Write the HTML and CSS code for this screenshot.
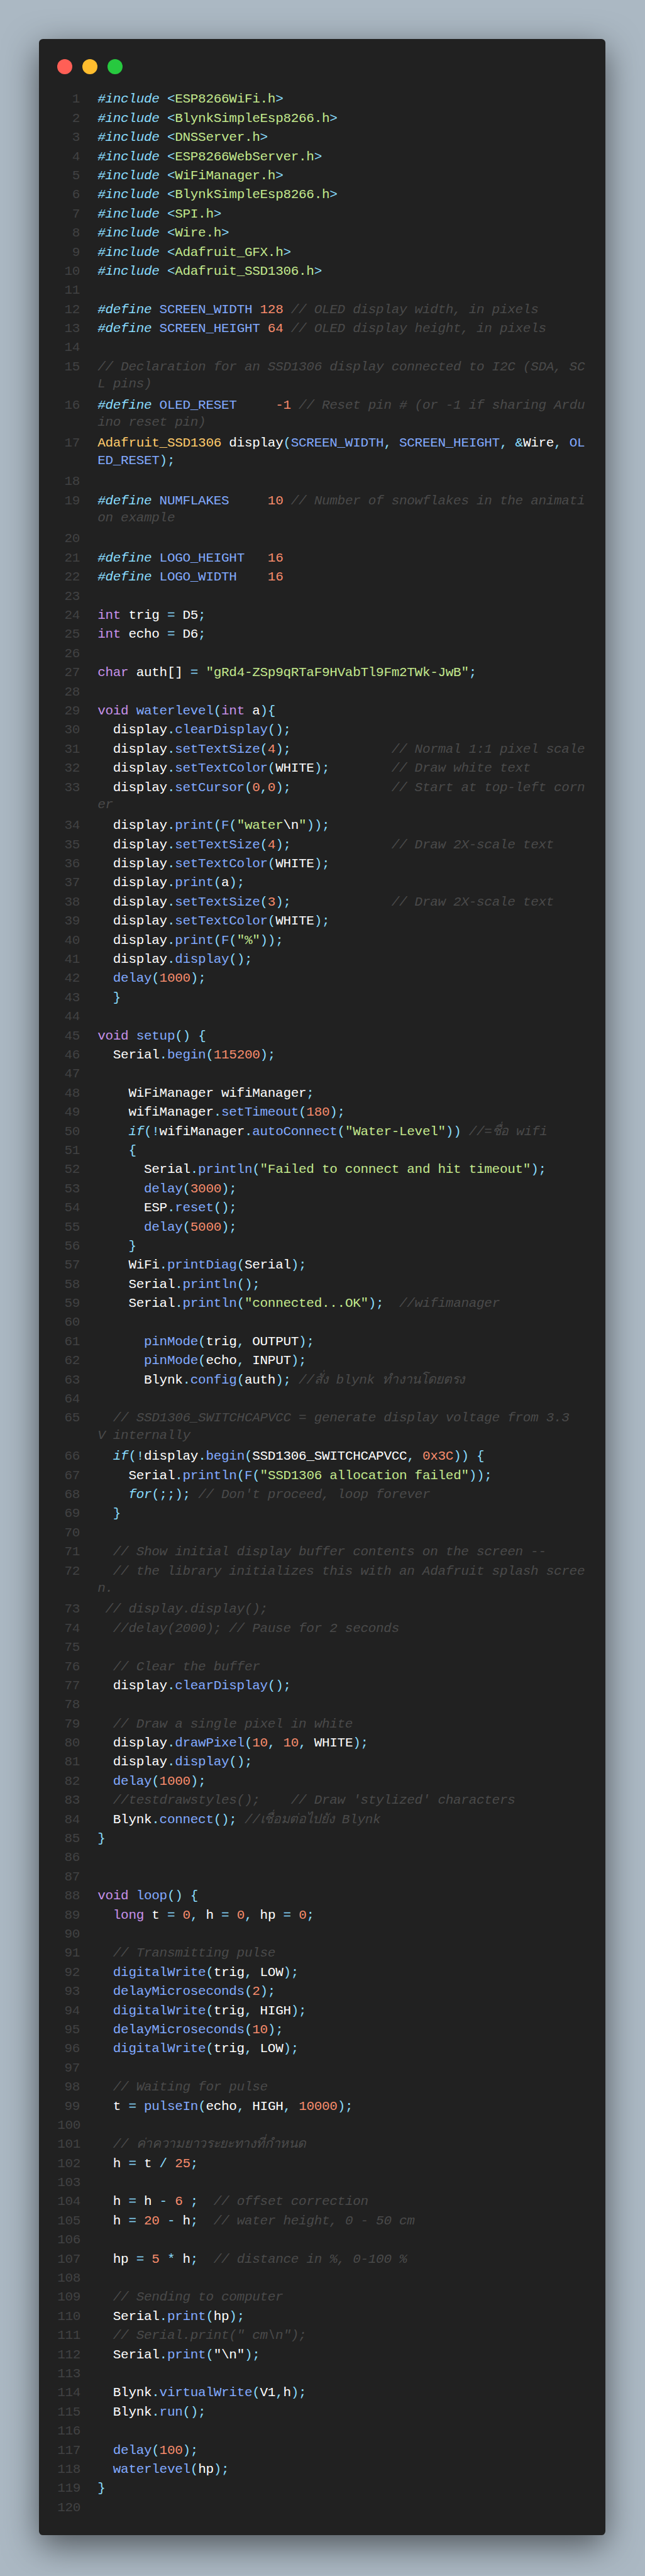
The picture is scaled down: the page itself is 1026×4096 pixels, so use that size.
FILE: index.html
```html
<!DOCTYPE html>
<html lang="en">
<head>
<meta charset="utf-8">
<title>Water level sketch</title>
<link rel="stylesheet" href="styles.css">
</head>
<body>
<main class="window">
<div class="controls"><span class="dot red"></span><span class="dot yellow"></span><span class="dot green"></span></div>
<div class="lines">
<div class="row"><span class="num">1</span><span class="code"><i class="m">#include</i> <b class="o">&lt;</b><b class="s">ESP8266WiFi.h</b><b class="o">&gt;</b></span></div>
<div class="row"><span class="num">2</span><span class="code"><i class="m">#include</i> <b class="o">&lt;</b><b class="s">BlynkSimpleEsp8266.h</b><b class="o">&gt;</b></span></div>
<div class="row"><span class="num">3</span><span class="code"><i class="m">#include</i> <b class="o">&lt;</b><b class="s">DNSServer.h</b><b class="o">&gt;</b></span></div>
<div class="row"><span class="num">4</span><span class="code"><i class="m">#include</i> <b class="o">&lt;</b><b class="s">ESP8266WebServer.h</b><b class="o">&gt;</b></span></div>
<div class="row"><span class="num">5</span><span class="code"><i class="m">#include</i> <b class="o">&lt;</b><b class="s">WiFiManager.h</b><b class="o">&gt;</b></span></div>
<div class="row"><span class="num">6</span><span class="code"><i class="m">#include</i> <b class="o">&lt;</b><b class="s">BlynkSimpleEsp8266.h</b><b class="o">&gt;</b></span></div>
<div class="row"><span class="num">7</span><span class="code"><i class="m">#include</i> <b class="o">&lt;</b><b class="s">SPI.h</b><b class="o">&gt;</b></span></div>
<div class="row"><span class="num">8</span><span class="code"><i class="m">#include</i> <b class="o">&lt;</b><b class="s">Wire.h</b><b class="o">&gt;</b></span></div>
<div class="row"><span class="num">9</span><span class="code"><i class="m">#include</i> <b class="o">&lt;</b><b class="s">Adafruit_GFX.h</b><b class="o">&gt;</b></span></div>
<div class="row"><span class="num">10</span><span class="code"><i class="m">#include</i> <b class="o">&lt;</b><b class="s">Adafruit_SSD1306.h</b><b class="o">&gt;</b></span></div>
<div class="row"><span class="num">11</span><span class="code"></span></div>
<div class="row"><span class="num">12</span><span class="code"><i class="m">#define</i> <b class="f">SCREEN_WIDTH</b> <b class="n">128</b> <i class="c">// OLED display width, in pixels</i></span></div>
<div class="row"><span class="num">13</span><span class="code"><i class="m">#define</i> <b class="f">SCREEN_HEIGHT</b> <b class="n">64</b> <i class="c">// OLED display height, in pixels</i></span></div>
<div class="row"><span class="num">14</span><span class="code"></span></div>
<div class="row wrap"><span class="num">15</span><span class="code"><i class="c">// Declaration for an SSD1306 display connected to I2C (SDA, SC</i>
<i class="c">L pins)</i></span></div>
<div class="row wrap"><span class="num">16</span><span class="code"><i class="m">#define</i> <b class="f">OLED_RESET</b>     <b class="n">-1</b> <i class="c">// Reset pin # (or -1 if sharing Ardu</i>
<i class="c">ino reset pin)</i></span></div>
<div class="row wrap"><span class="num">17</span><span class="code"><b class="t">Adafruit_SSD1306</b> display<b class="o">(</b><b class="f">SCREEN_WIDTH</b><b class="o">,</b> <b class="f">SCREEN_HEIGHT</b><b class="o">,</b> <b class="o">&amp;</b>Wire<b class="o">,</b> <b class="f">OL</b>
<b class="f">ED_RESET</b><b class="o">);</b></span></div>
<div class="row"><span class="num">18</span><span class="code"></span></div>
<div class="row wrap"><span class="num">19</span><span class="code"><i class="m">#define</i> <b class="f">NUMFLAKES</b>     <b class="n">10</b> <i class="c">// Number of snowflakes in the animati</i>
<i class="c">on example</i></span></div>
<div class="row"><span class="num">20</span><span class="code"></span></div>
<div class="row"><span class="num">21</span><span class="code"><i class="m">#define</i> <b class="f">LOGO_HEIGHT</b>   <b class="n">16</b></span></div>
<div class="row"><span class="num">22</span><span class="code"><i class="m">#define</i> <b class="f">LOGO_WIDTH</b>    <b class="n">16</b></span></div>
<div class="row"><span class="num">23</span><span class="code"></span></div>
<div class="row"><span class="num">24</span><span class="code"><b class="k">int</b> trig <b class="o">=</b> D5<b class="o">;</b></span></div>
<div class="row"><span class="num">25</span><span class="code"><b class="k">int</b> echo <b class="o">=</b> D6<b class="o">;</b></span></div>
<div class="row"><span class="num">26</span><span class="code"></span></div>
<div class="row"><span class="num">27</span><span class="code"><b class="k">char</b> auth[] <b class="o">=</b> <b class="s">"gRd4-ZSp9qRTaF9HVabTl9Fm2TWk-JwB"</b><b class="o">;</b></span></div>
<div class="row"><span class="num">28</span><span class="code"></span></div>
<div class="row"><span class="num">29</span><span class="code"><b class="k">void</b> <b class="f">waterlevel</b><b class="o">(</b><b class="k">int</b> a<b class="o">){</b></span></div>
<div class="row"><span class="num">30</span><span class="code">  display<b class="o">.</b><b class="f">clearDisplay</b><b class="o">();</b></span></div>
<div class="row"><span class="num">31</span><span class="code">  display<b class="o">.</b><b class="f">setTextSize</b><b class="o">(</b><b class="n">4</b><b class="o">);</b>             <i class="c">// Normal 1:1 pixel scale</i></span></div>
<div class="row"><span class="num">32</span><span class="code">  display<b class="o">.</b><b class="f">setTextColor</b><b class="o">(</b>WHITE<b class="o">);</b>        <i class="c">// Draw white text</i></span></div>
<div class="row wrap"><span class="num">33</span><span class="code">  display<b class="o">.</b><b class="f">setCursor</b><b class="o">(</b><b class="n">0</b><b class="o">,</b><b class="n">0</b><b class="o">);</b>             <i class="c">// Start at top-left corn</i>
<i class="c">er</i></span></div>
<div class="row"><span class="num">34</span><span class="code">  display<b class="o">.</b><b class="f">print</b><b class="o">(</b><b class="f">F</b><b class="o">(</b><b class="s">"water</b>\n<b class="s">"</b><b class="o">));</b></span></div>
<div class="row"><span class="num">35</span><span class="code">  display<b class="o">.</b><b class="f">setTextSize</b><b class="o">(</b><b class="n">4</b><b class="o">);</b>             <i class="c">// Draw 2X-scale text</i></span></div>
<div class="row"><span class="num">36</span><span class="code">  display<b class="o">.</b><b class="f">setTextColor</b><b class="o">(</b>WHITE<b class="o">);</b></span></div>
<div class="row"><span class="num">37</span><span class="code">  display<b class="o">.</b><b class="f">print</b><b class="o">(</b>a<b class="o">);</b></span></div>
<div class="row"><span class="num">38</span><span class="code">  display<b class="o">.</b><b class="f">setTextSize</b><b class="o">(</b><b class="n">3</b><b class="o">);</b>             <i class="c">// Draw 2X-scale text</i></span></div>
<div class="row"><span class="num">39</span><span class="code">  display<b class="o">.</b><b class="f">setTextColor</b><b class="o">(</b>WHITE<b class="o">);</b></span></div>
<div class="row"><span class="num">40</span><span class="code">  display<b class="o">.</b><b class="f">print</b><b class="o">(</b><b class="f">F</b><b class="o">(</b><b class="s">"%"</b><b class="o">));</b></span></div>
<div class="row"><span class="num">41</span><span class="code">  display<b class="o">.</b><b class="f">display</b><b class="o">();</b></span></div>
<div class="row"><span class="num">42</span><span class="code">  <b class="f">delay</b><b class="o">(</b><b class="n">1000</b><b class="o">);</b></span></div>
<div class="row"><span class="num">43</span><span class="code">  <b class="o">}</b></span></div>
<div class="row"><span class="num">44</span><span class="code"></span></div>
<div class="row"><span class="num">45</span><span class="code"><b class="k">void</b> <b class="f">setup</b><b class="o">()</b> <b class="o">{</b></span></div>
<div class="row"><span class="num">46</span><span class="code">  Serial<b class="o">.</b><b class="f">begin</b><b class="o">(</b><b class="n">115200</b><b class="o">);</b></span></div>
<div class="row"><span class="num">47</span><span class="code"></span></div>
<div class="row"><span class="num">48</span><span class="code">    WiFiManager wifiManager<b class="o">;</b></span></div>
<div class="row"><span class="num">49</span><span class="code">    wifiManager<b class="o">.</b><b class="f">setTimeout</b><b class="o">(</b><b class="n">180</b><b class="o">);</b></span></div>
<div class="row"><span class="num">50</span><span class="code">    <i class="o">if</i><b class="o">(!</b>wifiManager<b class="o">.</b><b class="f">autoConnect</b><b class="o">(</b><b class="s">"Water-Level"</b><b class="o">))</b> <i class="c">//=ชื่อ wifi</i></span></div>
<div class="row"><span class="num">51</span><span class="code">    <b class="o">{</b></span></div>
<div class="row"><span class="num">52</span><span class="code">      Serial<b class="o">.</b><b class="f">println</b><b class="o">(</b><b class="s">"Failed to connect and hit timeout"</b><b class="o">);</b></span></div>
<div class="row"><span class="num">53</span><span class="code">      <b class="f">delay</b><b class="o">(</b><b class="n">3000</b><b class="o">);</b></span></div>
<div class="row"><span class="num">54</span><span class="code">      ESP<b class="o">.</b><b class="f">reset</b><b class="o">();</b></span></div>
<div class="row"><span class="num">55</span><span class="code">      <b class="f">delay</b><b class="o">(</b><b class="n">5000</b><b class="o">);</b></span></div>
<div class="row"><span class="num">56</span><span class="code">    <b class="o">}</b></span></div>
<div class="row"><span class="num">57</span><span class="code">    WiFi<b class="o">.</b><b class="f">printDiag</b><b class="o">(</b>Serial<b class="o">);</b></span></div>
<div class="row"><span class="num">58</span><span class="code">    Serial<b class="o">.</b><b class="f">println</b><b class="o">();</b></span></div>
<div class="row"><span class="num">59</span><span class="code">    Serial<b class="o">.</b><b class="f">println</b><b class="o">(</b><b class="s">"connected...OK"</b><b class="o">);</b>  <i class="c">//wifimanager</i></span></div>
<div class="row"><span class="num">60</span><span class="code"></span></div>
<div class="row"><span class="num">61</span><span class="code">      <b class="f">pinMode</b><b class="o">(</b>trig<b class="o">,</b> OUTPUT<b class="o">);</b></span></div>
<div class="row"><span class="num">62</span><span class="code">      <b class="f">pinMode</b><b class="o">(</b>echo<b class="o">,</b> INPUT<b class="o">);</b></span></div>
<div class="row"><span class="num">63</span><span class="code">      Blynk<b class="o">.</b><b class="f">config</b><b class="o">(</b>auth<b class="o">);</b> <i class="c">//สั่ง blynk ทำงานโดยตรง</i></span></div>
<div class="row"><span class="num">64</span><span class="code"></span></div>
<div class="row wrap"><span class="num">65</span><span class="code">  <i class="c">// SSD1306_SWITCHCAPVCC = generate display voltage from 3.3</i>
<i class="c">V internally</i></span></div>
<div class="row"><span class="num">66</span><span class="code">  <i class="o">if</i><b class="o">(!</b>display<b class="o">.</b><b class="f">begin</b><b class="o">(</b>SSD1306_SWITCHCAPVCC<b class="o">,</b> <b class="n">0x3C</b><b class="o">))</b> <b class="o">{</b></span></div>
<div class="row"><span class="num">67</span><span class="code">    Serial<b class="o">.</b><b class="f">println</b><b class="o">(</b><b class="f">F</b><b class="o">(</b><b class="s">"SSD1306 allocation failed"</b><b class="o">));</b></span></div>
<div class="row"><span class="num">68</span><span class="code">    <i class="o">for</i><b class="o">(;;);</b> <i class="c">// Don't proceed, loop forever</i></span></div>
<div class="row"><span class="num">69</span><span class="code">  <b class="o">}</b></span></div>
<div class="row"><span class="num">70</span><span class="code"></span></div>
<div class="row"><span class="num">71</span><span class="code">  <i class="c">// Show initial display buffer contents on the screen --</i></span></div>
<div class="row wrap"><span class="num">72</span><span class="code">  <i class="c">// the library initializes this with an Adafruit splash scree</i>
<i class="c">n.</i></span></div>
<div class="row"><span class="num">73</span><span class="code"> <i class="c">// display.display();</i></span></div>
<div class="row"><span class="num">74</span><span class="code">  <i class="c">//delay(2000); // Pause for 2 seconds</i></span></div>
<div class="row"><span class="num">75</span><span class="code"></span></div>
<div class="row"><span class="num">76</span><span class="code">  <i class="c">// Clear the buffer</i></span></div>
<div class="row"><span class="num">77</span><span class="code">  display<b class="o">.</b><b class="f">clearDisplay</b><b class="o">();</b></span></div>
<div class="row"><span class="num">78</span><span class="code"></span></div>
<div class="row"><span class="num">79</span><span class="code">  <i class="c">// Draw a single pixel in white</i></span></div>
<div class="row"><span class="num">80</span><span class="code">  display<b class="o">.</b><b class="f">drawPixel</b><b class="o">(</b><b class="n">10</b><b class="o">,</b> <b class="n">10</b><b class="o">,</b> WHITE<b class="o">);</b></span></div>
<div class="row"><span class="num">81</span><span class="code">  display<b class="o">.</b><b class="f">display</b><b class="o">();</b></span></div>
<div class="row"><span class="num">82</span><span class="code">  <b class="f">delay</b><b class="o">(</b><b class="n">1000</b><b class="o">);</b></span></div>
<div class="row"><span class="num">83</span><span class="code">  <i class="c">//testdrawstyles();    // Draw 'stylized' characters</i></span></div>
<div class="row"><span class="num">84</span><span class="code">  Blynk<b class="o">.</b><b class="f">connect</b><b class="o">();</b> <i class="c">//เชื่อมต่อไปยัง Blynk</i></span></div>
<div class="row"><span class="num">85</span><span class="code"><b class="o">}</b></span></div>
<div class="row"><span class="num">86</span><span class="code"></span></div>
<div class="row"><span class="num">87</span><span class="code"></span></div>
<div class="row"><span class="num">88</span><span class="code"><b class="k">void</b> <b class="f">loop</b><b class="o">()</b> <b class="o">{</b></span></div>
<div class="row"><span class="num">89</span><span class="code">  <b class="k">long</b> t <b class="o">=</b> <b class="n">0</b><b class="o">,</b> h <b class="o">=</b> <b class="n">0</b><b class="o">,</b> hp <b class="o">=</b> <b class="n">0</b><b class="o">;</b></span></div>
<div class="row"><span class="num">90</span><span class="code"></span></div>
<div class="row"><span class="num">91</span><span class="code">  <i class="c">// Transmitting pulse</i></span></div>
<div class="row"><span class="num">92</span><span class="code">  <b class="f">digitalWrite</b><b class="o">(</b>trig<b class="o">,</b> LOW<b class="o">);</b></span></div>
<div class="row"><span class="num">93</span><span class="code">  <b class="f">delayMicroseconds</b><b class="o">(</b><b class="n">2</b><b class="o">);</b></span></div>
<div class="row"><span class="num">94</span><span class="code">  <b class="f">digitalWrite</b><b class="o">(</b>trig<b class="o">,</b> HIGH<b class="o">);</b></span></div>
<div class="row"><span class="num">95</span><span class="code">  <b class="f">delayMicroseconds</b><b class="o">(</b><b class="n">10</b><b class="o">);</b></span></div>
<div class="row"><span class="num">96</span><span class="code">  <b class="f">digitalWrite</b><b class="o">(</b>trig<b class="o">,</b> LOW<b class="o">);</b></span></div>
<div class="row"><span class="num">97</span><span class="code"></span></div>
<div class="row"><span class="num">98</span><span class="code">  <i class="c">// Waiting for pulse</i></span></div>
<div class="row"><span class="num">99</span><span class="code">  t <b class="o">=</b> <b class="f">pulseIn</b><b class="o">(</b>echo<b class="o">,</b> HIGH<b class="o">,</b> <b class="n">10000</b><b class="o">);</b></span></div>
<div class="row"><span class="num">100</span><span class="code"></span></div>
<div class="row"><span class="num">101</span><span class="code">  <i class="c">// ค่าความยาวระยะทางที่กำหนด</i></span></div>
<div class="row"><span class="num">102</span><span class="code">  h <b class="o">=</b> t <b class="o">/</b> <b class="n">25</b><b class="o">;</b></span></div>
<div class="row"><span class="num">103</span><span class="code"></span></div>
<div class="row"><span class="num">104</span><span class="code">  h <b class="o">=</b> h <b class="o">-</b> <b class="n">6</b> <b class="o">;</b>  <i class="c">// offset correction</i></span></div>
<div class="row"><span class="num">105</span><span class="code">  h <b class="o">=</b> <b class="n">20</b> <b class="o">-</b> h<b class="o">;</b>  <i class="c">// water height, 0 - 50 cm</i></span></div>
<div class="row"><span class="num">106</span><span class="code"></span></div>
<div class="row"><span class="num">107</span><span class="code">  hp <b class="o">=</b> <b class="n">5</b> <b class="o">*</b> h<b class="o">;</b>  <i class="c">// distance in %, 0-100 %</i></span></div>
<div class="row"><span class="num">108</span><span class="code"></span></div>
<div class="row"><span class="num">109</span><span class="code">  <i class="c">// Sending to computer</i></span></div>
<div class="row"><span class="num">110</span><span class="code">  Serial<b class="o">.</b><b class="f">print</b><b class="o">(</b>hp<b class="o">);</b></span></div>
<div class="row"><span class="num">111</span><span class="code">  <i class="c">// Serial.print(" cm\n");</i></span></div>
<div class="row"><span class="num">112</span><span class="code">  Serial<b class="o">.</b><b class="f">print</b><b class="o">(</b>"\n"<b class="o">);</b></span></div>
<div class="row"><span class="num">113</span><span class="code"></span></div>
<div class="row"><span class="num">114</span><span class="code">  Blynk<b class="o">.</b><b class="f">virtualWrite</b><b class="o">(</b>V1<b class="o">,</b>h<b class="o">);</b></span></div>
<div class="row"><span class="num">115</span><span class="code">  Blynk<b class="o">.</b><b class="f">run</b><b class="o">();</b></span></div>
<div class="row"><span class="num">116</span><span class="code"></span></div>
<div class="row"><span class="num">117</span><span class="code">  <b class="f">delay</b><b class="o">(</b><b class="n">100</b><b class="o">);</b></span></div>
<div class="row"><span class="num">118</span><span class="code">  <b class="f">waterlevel</b><b class="o">(</b>hp<b class="o">);</b></span></div>
<div class="row"><span class="num">119</span><span class="code"><b class="o">}</b></span></div>
<div class="row"><span class="num">120</span><span class="code"></span></div>
</div>
</main>
</body>
</html>
```
FILE: styles.css
```css
* {
  box-sizing: border-box;
}

html,
body {
  margin: 0;
  background: #abb8c3;
}

body {
  padding: 62.4px 0 64px 62.4px;
}

.window {
  width: 900.8px;
  padding: 32px 0 26.8px 28.8px;
  background: #212121;
  border-radius: 6.4px;
  box-shadow: 0 16px 54px rgba(0, 0, 0, 0.55);
}

.controls {
  display: flex;
  gap: 16px;
  margin-bottom: 26px;
}

.dot {
  width: 24px;
  height: 24px;
  border-radius: 50%;
}

.red { background: #ff5f56; }
.yellow { background: #ffbd2e; }
.green { background: #27c93f; }

.lines {
  font-family: "Liberation Mono", "Noto Sans CJK SC", monospace;
  font-size: 21px;
  letter-spacing: -0.3px;
  line-height: 27.2px;
  color: #ffffff;
}

.row {
  display: flex;
  gap: 28.2px;
  min-height: 30.4px;
}

.row.wrap {
  min-height: 60.8px;
}

.num {
  flex: none;
  width: 35.8px;
  text-align: right;
  color: #414243;
}

.code {
  white-space: pre;
}

.code b {
  font-weight: 400;
}

.m { color: #89ddff; font-style: italic; }
.o { color: #89ddff; }
.s { color: #c3e88d; }
.f { color: #82aaff; }
.n { color: #f78c6c; }
.k { color: #c792ea; }
.t { color: #ffcb6b; }
.c { color: #4a4a4a; font-style: italic; }
```
